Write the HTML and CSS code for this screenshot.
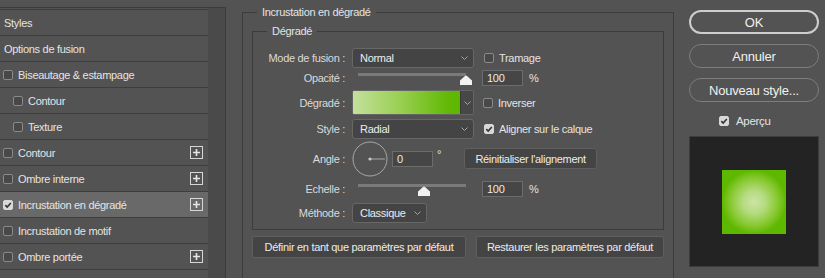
FILE: index.html
```html
<!DOCTYPE html>
<html lang="fr">
<head>
    <meta charset="UTF-8">
    <title>Style de calque</title>
    <link rel="stylesheet" href="styles.css">
</head>
<body>
<div class="styles-panel">
    <ul class="style-list">
        <li class="style-row">Styles</li>
        <li class="style-row">Options de fusion</li>
        <li class="style-row"><span class="check"></span>Biseautage &amp; estampage</li>
        <li class="style-row sub"><span class="check"></span>Contour</li>
        <li class="style-row sub"><span class="check"></span>Texture</li>
        <li class="style-row"><span class="check"></span>Contour
            <svg class="add" width="13" height="13" viewBox="0 0 13 13"><rect x="0.5" y="0.5" width="12" height="12" fill="none" stroke="#d6d6d6"/><path d="M3 6.5H10M6.5 3V10" stroke="#e6e6e6" stroke-width="1.6"/></svg></li>
        <li class="style-row"><span class="check"></span>Ombre interne
            <svg class="add" width="13" height="13" viewBox="0 0 13 13"><rect x="0.5" y="0.5" width="12" height="12" fill="none" stroke="#d6d6d6"/><path d="M3 6.5H10M6.5 3V10" stroke="#e6e6e6" stroke-width="1.6"/></svg></li>
        <li class="style-row active"><span class="check on"><svg width="8" height="8" viewBox="0 0 8 8"><path d="M1.3 4.1L3.2 6L6.8 2" fill="none" stroke="#333" stroke-width="1.6"/></svg></span>Incrustation en dégradé
            <svg class="add" width="13" height="13" viewBox="0 0 13 13"><rect x="0.5" y="0.5" width="12" height="12" fill="none" stroke="#d6d6d6"/><path d="M3 6.5H10M6.5 3V10" stroke="#e6e6e6" stroke-width="1.6"/></svg></li>
        <li class="style-row"><span class="check"></span>Incrustation de motif</li>
        <li class="style-row"><span class="check"></span>Ombre portée
            <svg class="add" width="13" height="13" viewBox="0 0 13 13"><rect x="0.5" y="0.5" width="12" height="12" fill="none" stroke="#d6d6d6"/><path d="M3 6.5H10M6.5 3V10" stroke="#e6e6e6" stroke-width="1.6"/></svg></li>
        <li class="style-row filler"></li>
    </ul>
    <div class="scroll-track"></div>
</div>

<fieldset class="group outer">
    <legend>Incrustation en dégradé</legend>
    <fieldset class="group inner">
        <legend>Dégradé</legend>

        <div class="field r1">
            <span class="field-label">Mode de fusion :</span>
            <div class="select wide">Normal
                <svg width="7" height="4" viewBox="0 0 7 4"><path d="M0.5 0.5L3.5 3.5L6.5 0.5" fill="none" stroke="#a3a3a3"/></svg></div>
            <span class="check opt"></span><span>Tramage</span>
        </div>

        <div class="field r2">
            <span class="field-label">Opacité :</span>
            <div class="slider">
                <div class="track">
                    <svg class="thumb" style="left: 100%" width="12" height="10" viewBox="0 0 12 10"><path d="M5 1Q6 0 7 1L12 5.5V10H0V5.5Z" fill="#f2f2f2"/></svg>
                </div>
            </div>
            <span class="num">100</span><span class="unit">%</span>
        </div>

        <div class="field r3">
            <span class="field-label">Dégradé :</span>
            <div class="gradient-pick">
                <div class="gradient"></div>
                <div class="drop"><svg width="7" height="4" viewBox="0 0 7 4"><path d="M0.5 0.5L3.5 3.5L6.5 0.5" fill="none" stroke="#a3a3a3"/></svg></div>
            </div>
            <span class="check opt tight"></span><span>Inverser</span>
        </div>

        <div class="field r4">
            <span class="field-label">Style :</span>
            <div class="select wide">Radial
                <svg width="7" height="4" viewBox="0 0 7 4"><path d="M0.5 0.5L3.5 3.5L6.5 0.5" fill="none" stroke="#a3a3a3"/></svg></div>
            <span class="check opt on"><svg width="8" height="8" viewBox="0 0 8 8"><path d="M1.3 4.1L3.2 6L6.8 2" fill="none" stroke="#333" stroke-width="1.6"/></svg></span><span>Aligner sur le calque</span>
        </div>

        <div class="field r5">
            <span class="field-label">Angle :</span>
            <svg class="dial" width="36" height="36" viewBox="0 0 36 36">
                <circle cx="18" cy="18" r="17" fill="none" stroke="#a8a8a8"/>
                <path d="M18 18H33" stroke="#a8a8a8"/>
                <circle cx="18" cy="18" r="1.6" fill="#c8c8c8"/>
            </svg>
            <span class="num angle">0</span><span class="deg">°</span>
            <button class="small-btn reset">Réinitialiser l'alignement</button>
        </div>

        <div class="field r6">
            <span class="field-label">Echelle :</span>
            <div class="slider">
                <div class="track">
                    <svg class="thumb" style="left: 61%" width="12" height="10" viewBox="0 0 12 10"><path d="M5 1Q6 0 7 1L12 5.5V10H0V5.5Z" fill="#f2f2f2"/></svg>
                </div>
            </div>
            <span class="num">100</span><span class="unit">%</span>
        </div>

        <div class="field r7">
            <span class="field-label">Méthode :</span>
            <div class="select narrow">Classique
                <svg width="7" height="4" viewBox="0 0 7 4"><path d="M0.5 0.5L3.5 3.5L6.5 0.5" fill="none" stroke="#a3a3a3"/></svg></div>
        </div>
    </fieldset>

    <div class="actions">
        <button class="small-btn first">Définir en tant que paramètres par défaut</button>
        <button class="small-btn second">Restaurer les paramètres par défaut</button>
    </div>
</fieldset>

<aside class="side">
    <button class="pill ok">OK</button>
    <button class="pill">Annuler</button>
    <button class="pill">Nouveau style...</button>
    <div class="preview-toggle">
        <span class="check on"><svg width="8" height="8" viewBox="0 0 8 8"><path d="M1.3 4.1L3.2 6L6.8 2" fill="none" stroke="#333" stroke-width="1.6"/></svg></span>Aperçu
    </div>
    <div class="preview">
        <div class="preview-swatch"></div>
    </div>
</aside>
</body>
</html>
```

FILE: styles.css
```css
body {
    margin: 0;
    height: 278px;
    overflow: hidden;
    display: flex;
    align-items: flex-start;
    background-color: #535353;
    color: #e4e4e4;
    font-family: "Liberation Sans", Arial, sans-serif;
    font-size: 11px;
    letter-spacing: -0.3px;
}

/* left list of effects */
.styles-panel {
    display: flex;
    width: 225px;
    height: 270px;
    margin-top: 7px;
    border-top: 1px solid #3b3b3b;
    border-right: 1px solid #3b3b3b;
}
.style-list {
    list-style: none;
    margin: 1px 0 0 0;
    padding: 0;
    width: 208px;
}
.style-row {
    display: flex;
    align-items: center;
    height: 26px;
    box-sizing: border-box;
    padding-left: 4px;
    border-top: 1px solid #3e3e3e;
}
.style-row.filler {
    height: 8px;
}
.style-row .check {
    margin: 0 5px 0 -1px;
}
.style-row.sub {
    padding-left: 14px;
}
.style-row.active {
    background-color: #696969;
}
.add {
    margin-left: auto;
    margin-right: 5px;
}
.scroll-track {
    width: 17px;
    background-color: #4a4a4a;
}

/* checkboxes */
.check {
    display: inline-flex;
    align-items: center;
    justify-content: center;
    width: 10px;
    height: 10px;
    box-sizing: border-box;
    border: 1px solid #8a8a8a;
    border-radius: 2px;
    background-color: #484848;
    flex-shrink: 0;
}
.check.on {
    background-color: #d8d8d8;
    border-color: #d8d8d8;
}

/* group boxes */
.group {
    margin: 0;
    border: 1px solid #3c3c3c;
    min-width: 0;
}
.group legend {
    margin-left: 5px;
    padding: 0 5px;
    line-height: 13px;
}
.outer {
    width: 432px;
    height: 272px;
    box-sizing: border-box;
    margin: 6px 0 0 16px;
    padding: 6px 9px 0 9px;
    border-bottom: none;
}
.inner {
    padding: 9px 9px 5px 9px;
}

.field {
    display: flex;
    align-items: center;
}
.r1 { height: 21px; }
.r2 { height: 20px; }
.r3 { height: 29px; }
.r4 { height: 24px; }
.r5 { height: 35px; }
.r6 { height: 26px; }
.r7 { height: 22px; }

.field-label {
    width: 83px;
    margin-right: 7px;
    text-align: right;
    color: #dadada;
    flex-shrink: 0;
}

.select {
    display: flex;
    align-items: center;
    justify-content: space-between;
    height: 20px;
    box-sizing: border-box;
    padding: 0 5px 0 7px;
    background-color: #444444;
    border: 1px solid #676767;
    border-radius: 3px;
    color: #ececec;
}
.select.wide {
    width: 122px;
}
.select.narrow {
    width: 75px;
}

.check.opt {
    margin: 0 5px 0 10px;
}
.check.opt.tight {
    margin-left: 9px;
}

.slider {
    width: 122px;
    height: 12px;
    margin-top: 2px;
}
.track {
    position: relative;
    height: 3px;
    margin: 0 8px 0 6px;
    background-color: #7a7a7a;
}
.thumb {
    position: absolute;
    top: 2px;
    margin-left: -6px;
}

.num {
    display: flex;
    align-items: center;
    width: 41px;
    height: 16px;
    box-sizing: border-box;
    margin-left: 8px;
    padding-left: 4px;
    background-color: #464646;
    border: 1px solid #6c6c6c;
    color: #ececec;
}
.unit {
    margin-left: 6px;
}

.gradient-pick {
    display: flex;
    width: 122px;
    height: 25px;
    box-sizing: border-box;
    border: 1px solid #656565;
    border-radius: 2px;
    overflow: hidden;
}
.gradient {
    flex: 1;
    background: linear-gradient(90deg, #c4e09c 0%, #98cf50 45%, #62b906 88%, #5db700 100%);
}
.drop {
    display: flex;
    align-items: center;
    justify-content: center;
    width: 12px;
    background-color: #474747;
    border-left: 1px solid #3a3a3a;
}

.dial {
    flex-shrink: 0;
}
.num.angle {
    margin-left: 4px;
}
.deg {
    align-self: flex-start;
    margin: 7px 0 0 4px;
}

.small-btn {
    height: 22px;
    padding: 0;
    background-color: #444444;
    border: 1px solid #5f5f5f;
    border-radius: 3px;
    color: #ececec;
    font-family: inherit;
    font-size: 11px;
    letter-spacing: -0.3px;
}
.reset {
    width: 133px;
    height: 21px;
    margin-left: 23px;
}
.actions {
    display: flex;
    gap: 10px;
    margin-top: 6px;
}
.actions .first {
    width: 214px;
}
.actions .second {
    flex: 1;
}

/* right column */
.side {
    display: flex;
    flex-direction: column;
    width: 130px;
    margin: 10px 0 0 15px;
}
.pill {
    height: 24px;
    margin-bottom: 10px;
    padding: 0;
    background-color: #535353;
    border: 1px solid #7d7d7d;
    border-radius: 12px;
    color: #f0f0f0;
    font-family: inherit;
    font-size: 13px;
    letter-spacing: -0.2px;
}
.pill.ok {
    border: 2px solid #cdcdcd;
}
.preview-toggle {
    display: flex;
    align-items: center;
    margin-top: 3px;
    padding-left: 30px;
    font-size: 11.5px;
}
.preview-toggle .check {
    margin-right: 7px;
}
.preview {
    display: flex;
    align-items: center;
    justify-content: center;
    height: 129px;
    margin-top: 9px;
    background-color: #232323;
    border: 1px solid #3d3d3d;
}
.preview-swatch {
    width: 64px;
    height: 64px;
    background: radial-gradient(circle closest-side, #cbe4a6 0%, #b5db80 35%, #86c82e 75%, #5fb800 100%);
}
```
